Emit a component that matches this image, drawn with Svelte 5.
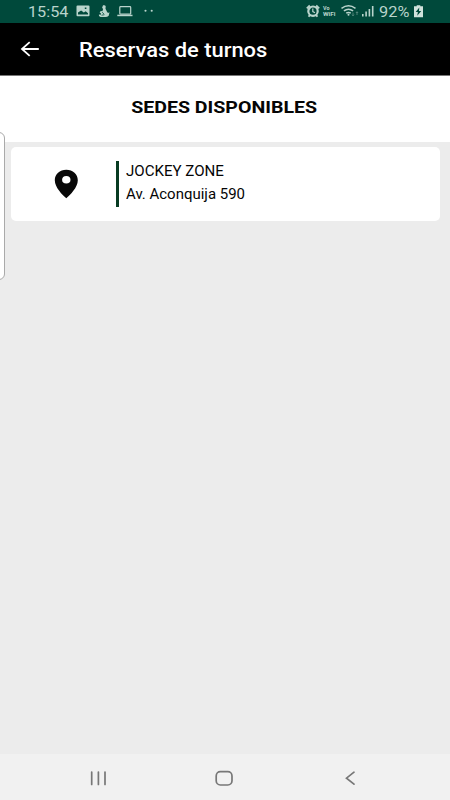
<script>
  const venues = [{ name: 'JOCKEY ZONE', address: 'Av. Aconquija 590' }];
</script>

<div class="screen">
  <div class="status">
    <span class="wide time">15:54</span>
    <svg class="left-icons" width="80" height="23" viewBox="0 0 80 23" fill="#b9d4cc">
      <path fill-rule="evenodd" d="M2.500 5.500h11q1 0 1 1v8.700q0 1-1 1h-11q-1 0-1-1V6.500q0-1 1-1zM3 14.500h10v-1.300l-2.300-2-1.900 1.300-2.700-2L3 12.500zM9.800 7.500v1.500h1.600v-1.500z" />
      <path d="M28 5.300q2.200-.6 2.700 1l-.2 2.500 1.500 3 1 1.200 1.500-.8-.8 3.500q-1.500 1.500-3.700 1.300h-4.500l-1.500-1-.1-1.400 1.800.2.400-1.100-1.500-1.400 1.300-1.200 1.500.1.700-2.300-1-1.200z" />
      <path d="M27.200 12.200l1.700 1.800M26.500 15.200l3-.5" stroke="#00493b" stroke-width=".8" />
      <rect x="44.800" y="6.600" width="10.900" height="7.600" rx=".8" fill="none" stroke="#b9d4cc" stroke-width="1.200" />
      <path d="M42.300 14.700h15.200v1.500H42.300z" />
      <circle cx="70.500" cy="10.800" r="1.050" /><circle cx="76.700" cy="10.800" r="1.050" />
    </svg>
    <svg class="right-icons" width="72" height="23" viewBox="0 0 72 23" fill="none" stroke="#b9d4cc">
      <circle cx="8" cy="11.200" r="4.700" stroke-width="2.200" />
      <path d="M7.800 8.600v3l2.200 1.100" stroke-width="1.200" />
      <path d="M1.800 8.300l3-2.800M14.200 8.300l-3-2.800M3.500 16.700l1.500-1.600M12.500 16.700L11 15.100" stroke-width="1.800" />
      <g fill="#b9d4cc" stroke="none" font-family="Roboto, sans-serif" font-weight="700" font-size="5">
        <text x="18" y="9.500" textLength="6.500" lengthAdjust="spacingAndGlyphs">Vo</text>
        <text x="18" y="15.700" textLength="12.500" lengthAdjust="spacingAndGlyphs">WiFi</text>
      </g>
      <path d="M36.500 8.300q7-5.100 14 0M38.900 10.900q4.600-3.400 9.200 0M41.200 13.200q2.300-1.600 4.600 0" stroke-width="1.500" />
      <circle cx="43.500" cy="14.700" r="1" fill="#b9d4cc" stroke="none" />
      <path d="M48 12.500v3.200m-1-1 1 1 1-1M52 15v-3.200m-1 1 1-1 1 1" stroke-width=".7" opacity=".6" />
      <path d="M57.800 14v2.400M61.100 11.500v4.900M64.400 9v7.400M67.700 6v10.400" stroke-width="1.600" />
    </svg>
    <span class="wide percent">92%</span>
    <svg class="battery" width="9" height="23" viewBox="0 0 9 23">
      <path fill="#d0e2dc" d="M2.700 5.200h3.600v1H9v11H0v-11h2.700z" />
      <path fill="#00493b" d="M5.300 7.500 1.700 12h2.200l-.7 3.700L7.300 11H5z" />
    </svg>
  </div>

  <header>
    <svg width="20" height="18" viewBox="0 0 20 18" fill="none" stroke="#fff" stroke-width="1.800">
      <path d="M18.800 9H2M9.700 2.200 2 9l7.700 6.800" />
    </svg>
    <span class="wide title">Reservas de turnos</span>
  </header>

  <div class="heading"><span class="wide">SEDES DISPONIBLES</span></div>

  <main>
    {#each venues as venue}
      <article>
        <svg width="24" height="30" viewBox="0 0 24 30">
          <path fill="#080808" fill-rule="evenodd" d="M12.300.8C5.800.8.800 5.300.800 11.200.800 18.500 8.300 25.500 12.300 29.300c4-3.800 11.500-10.800 11.500-18.100C23.800 5.300 18.800.8 12.300.8zM12.300 7a4.200 3.800 0 1 1 0 7.600A4.200 3.800 0 1 1 12.300 7z" />
        </svg>
        <div class="details">
          <span class="wide name">{venue.name}</span>
          <span class="wide address">{venue.address}</span>
        </div>
      </article>
    {/each}
  </main>

  <nav>
    <svg width="450" height="46" viewBox="0 0 450 46" fill="none" stroke="#777" stroke-width="1.700" stroke-linecap="round">
      <path d="M91.700 18v12.500M98.400 18v12.500M105 18v12.500" />
      <rect x="216.200" y="17.700" width="15.800" height="13.300" rx="4.200" />
      <path d="M354 18.200 346.500 24.200l7.500 6" />
    </svg>
  </nav>
  <div class="edge"></div>
</div>

<style>
  .screen {
    position: relative;
    display: flex;
    flex-direction: column;
    width: 450px;
    height: 800px;
    overflow: hidden;
    background: #ececec;
    color: #050505;
    font-family: Roboto, sans-serif;
  }
  svg { display: block; flex: none; }
  .wide {
    display: block;
    white-space: nowrap;
    transform-origin: left center;
  }
  .status {
    display: flex;
    align-items: center;
    height: 23px;
    padding-left: 28px;
    background: #00493b;
    color: #b9d4cc;
    font-size: 15px;
    line-height: 24px;
  }
  .time { width: 47px; transform: scaleX(1.080); }
  .left-icons { margin-right: 149.500px; }
  .percent { width: 34.500px; transform: scaleX(1.090); }
  .right-icons { margin-right: 2.500px; }
  header {
    box-sizing: border-box;
    display: flex;
    align-items: center;
    height: 53px;
    padding-left: 20px;
    background: #000;
    color: #fff;
    border-bottom: 1px solid #777;
  }
  .title {
    margin-left: 38.500px;
    padding-top: 2px;
    font-size: 19.500px;
    font-weight: 500;
    transform: scaleX(1.123);
  }
  .heading {
    display: flex;
    justify-content: center;
    height: 66px;
    line-height: 62px;
    background: #fff;
    font-size: 17.300px;
    font-weight: 700;
  }
  .heading .wide { transform: translateX(-1px) scaleX(1.132); transform-origin: center; }
  main { flex: 1; padding: 5px 10px 0 11px; }
  article {
    display: flex;
    align-items: center;
    height: 74px;
    padding-left: 43px;
    border-radius: 5px;
    background: #fff;
  }
  .details {
    height: 46px;
    margin-left: 38px;
    padding-left: 6.500px;
    border-left: 3px solid #073b22;
    font-size: 14px;
    line-height: 24px;
  }
  .name { height: 23px; margin-top: -2px; transform: scaleX(1.077); }
  .address { transform: scaleX(1.069); }
  nav { height: 46px; background: #f1f1f1; }
  .edge {
    position: absolute;
    top: 132px;
    left: -8px;
    width: 13px;
    height: 148px;
    box-sizing: border-box;
    border: 1px solid #aaa;
    border-radius: 6px;
    background: #fff;
  }
</style>
